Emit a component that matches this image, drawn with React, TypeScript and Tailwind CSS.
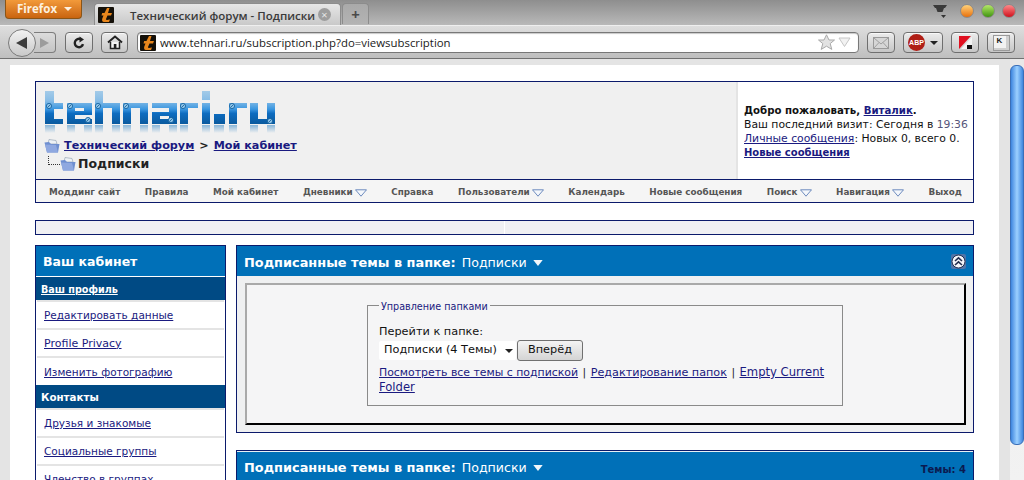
const V = '"DejaVu Sans", Verdana, sans-serif';

function Favicon() {
  return (
    <svg width="16" height="16" viewBox="0 0 16 16" className="shrink-0">
      <rect width="16" height="16" rx="1" fill="#141009" />
      <path d="M9 1 L11.5 1 L10 6 L14 6 L13 8.5 L9.5 8.5 L8 12 C7.8 13 8.6 13.2 12 12.5 L11 15 L6 15 C4 15 3.8 13 4.3 11.5 L5.5 8.5 L3.5 8.5 L4.2 6 L6.5 6 Z" fill="#e8861c" />
    </svg>
  );
}

function ToolBtn({ w, children }: { w: string; children: React.ReactNode }) {
  return (
    <div className={`${w} h-[21px] shrink-0 flex items-center justify-center rounded-[4px] border border-[#6f6f6f] bg-gradient-to-b from-[#ececec] to-[#c6c6c6] shadow-[inset_0_1px_0_#f8f8f8]`}>
      {children}
    </div>
  );
}

function Chrome() {
  return (
    <div className="shrink-0 h-[59px] flex flex-col" style={{ fontFamily: '"Open Sans", sans-serif' }}>
      <div className="h-[25px] flex items-start bg-gradient-to-b from-[#8e8e8e] to-[#b9b9b9] pl-[5px] pr-[8px]">
        <div className="w-[77px] h-[19px] flex items-center justify-center gap-[7px] pl-[2px] rounded-b-[4px] border border-t-0 border-[#8a5416] bg-gradient-to-b from-[#f29a3a] to-[#c9640e] text-[11.5px] font-bold text-[#fdf1df]">
          Firefox
          <span className="w-0 h-0 border-x-[4px] border-x-transparent border-t-[4px] border-t-[#fdf1df]" />
        </div>
        <div className="ml-[12px] mt-[3px] w-[247px] h-[22px] flex items-center pl-[3px] pr-[9px] rounded-t-[4px] border border-b-0 border-[#8c8c8c] bg-gradient-to-b from-[#e6e6e6] to-[#c9c9c9]">
          <Favicon />
          <span className="ml-[16px] pt-[2px] text-[11.5px] font-semibold text-[#3a3a3a] whitespace-nowrap">Технический форум - Подписки</span>
          <span className="ml-auto w-[13px] h-[13px] rounded-full bg-[#9d9d9d] flex items-center justify-center text-[#e6e6e6] text-[11px] leading-none">×</span>
        </div>
        <div className="ml-[1px] mt-[3px] w-[27px] h-[21px] flex items-center justify-center rounded-t-[4px] border border-b-0 border-[#8c8c8c] bg-gradient-to-b from-[#a9a9a9] to-[#b3b3b3] text-[15px] font-bold leading-none text-[#4a4a4a]">+</div>
        <div className="ml-auto mt-[4px] flex items-center">
          <svg width="16" height="14" viewBox="0 0 16 14" className="mr-[12px]">
            <path d="M1 1H15L13 4H12L10.5 8H5.5L4 4H3Z" fill="#3a3a3a" />
            <path d="M9 11H14L11.5 14Z" fill="#333" />
          </svg>
          <Light from="#ffd27a" to="#e8700c" />
          <span className="w-[7px]" />
          <Light from="#b5e868" to="#3f9410" />
          <span className="w-[7px]" />
          <Light from="#ff8a8a" to="#d0101c" />
        </div>
      </div>
      <div className="h-[34px] flex items-center bg-gradient-to-b from-[#dedede] to-[#bfbfbf] border-t border-[#efefef] border-b border-b-[#717171] pl-[8px] pr-[9px] pt-[1px]">
        <div className="flex items-center shrink-0">
          <div className="relative z-10 w-[28px] h-[28px] rounded-full border border-[#7a7a7a] bg-gradient-to-b from-[#f2f2f2] to-[#c9c9c9] flex items-center justify-center">
            <span className="w-0 h-0 border-y-[6px] border-y-transparent border-r-[11px] border-r-[#3d3d3d] mr-[2px]" />
          </div>
          <div className="-ml-[2px] w-[22px] h-[21px] rounded-r-[4px] border border-l-0 border-[#7d7d7d] bg-gradient-to-b from-[#dcdcdc] to-[#c4c4c4] flex items-center justify-center">
            <span className="w-0 h-0 border-y-[5px] border-y-transparent border-l-[9px] border-l-[#9c9c9c]" />
          </div>
        </div>
        <span className="w-[9px] shrink-0" />
        <ToolBtn w="w-[28px]">
          <svg width="14" height="14" viewBox="0 0 14 14" fill="none">
            <path d="M11 8.2A4.2 4.2 0 1 1 8.8 3.2" stroke="#222" strokeWidth="2.4" />
            <path d="M7.5 0.5L12 3.4L7.5 6.4Z" fill="#222" />
          </svg>
        </ToolBtn>
        <span className="w-[8px] shrink-0" />
        <ToolBtn w="w-[27px]">
          <svg width="16" height="15" viewBox="0 0 16 15" fill="none">
            <path d="M1 7.5L8 1.5L15 7.5" stroke="#222" strokeWidth="2" />
            <path d="M3.5 7V13.5H12.5V7" stroke="#222" strokeWidth="1.5" fill="#f4f4f4" />
            <rect x="6.8" y="9" width="2.6" height="4.5" fill="#222" />
          </svg>
        </ToolBtn>
        <span className="w-[9px] shrink-0" />
        <div className="w-[722px] h-[21px] shrink-0 flex items-center pl-[2px] pr-[6px] rounded-[4px] border border-[#787878] bg-white shadow-[inset_0_1px_1px_#c8c8c8]">
          <Favicon />
          <span className="ml-[4px] text-[11.4px] text-[#1a1a1a] whitespace-nowrap">www.tehnari.ru/subscription.php?do=viewsubscription</span>
          <svg width="34" height="17" viewBox="0 0 34 17" className="ml-auto">
            <path d="M8.5 0.8L11 6H16.5L12.2 9.6L13.8 15.4L8.5 12.2L3.2 15.4L4.8 9.6L0.5 6H6Z" fill="#e2e2e2" stroke="#a9a9a9" />
            <path d="M21 4H32L26.5 12.5Z" fill="#f2f2f2" stroke="#c6c6c6" />
          </svg>
        </div>
        <span className="w-[8px] shrink-0" />
        <ToolBtn w="w-[28px]">
          <svg width="16" height="12" viewBox="0 0 16 12">
            <rect x="0.5" y="0.5" width="15" height="11" fill="#d6d6d6" stroke="#9a9a9a" />
            <path d="M1 1L8 7L15 1M1 11L6 5.5M15 11L10 5.5" fill="none" stroke="#a0a0a0" />
          </svg>
        </ToolBtn>
        <span className="w-[8px] shrink-0" />
        <ToolBtn w="w-[40px]">
          <div className="flex items-center gap-[5px]">
            <span className="w-[17px] h-[17px] rounded-full bg-[#b01f16] text-white text-[7px] font-bold flex items-center justify-center leading-none" style={{ fontFamily: '"Liberation Sans", sans-serif' }}>ABP</span>
            <span className="w-0 h-0 border-x-[4px] border-x-transparent border-t-[4px] border-t-[#222]" />
          </div>
        </ToolBtn>
        <span className="w-[8px] shrink-0" />
        <ToolBtn w="w-[28px]">
          <svg width="16" height="15" viewBox="0 0 16 15">
            <path d="M2 1H14L2 14Z" fill="#e01020" />
            <path d="M15 2V14H4Z" fill="#f4f4f4" />
            <rect x="10" y="10" width="5" height="4" fill="#111" />
          </svg>
        </ToolBtn>
        <span className="w-[8px] shrink-0" />
        <ToolBtn w="w-[28px]">
          <div className="w-[17px] h-[16px] border border-[#9a9a9a] bg-[#f2f2f2] text-[8px] font-bold text-[#222] flex items-start justify-start pl-[3px] leading-[10px] shadow-[inset_-3px_-2px_0_#cfcfcf]" style={{ fontFamily: '"Liberation Sans", sans-serif' }}>K</div>
        </ToolBtn>
      </div>
    </div>
  );
}

function Light({ from, to }: { from: string; to: string }) {
  return <span className="w-[14px] h-[14px] rounded-full border border-[#8a8a8a]" style={{ background: `linear-gradient(${from}, ${to})` }} />;
}

const R: [number, number, number, number][] = [
  // t
  [45, 90, 9, 33], [45, 102, 18, 6], [45, 118, 18, 5],
  // e
  [67, 102, 25, 5], [67, 102, 8, 21], [84, 102, 8, 12], [67, 110, 25, 4], [67, 118, 25, 5],
  // h
  [95, 90, 8, 33], [95, 102, 25, 5], [112, 102, 8, 21],
  // n
  [123, 102, 25, 5], [123, 102, 8, 21], [140, 102, 8, 21],
  // a
  [152, 102, 25, 5], [169, 102, 8, 21], [152, 111, 25, 4], [152, 111, 8, 12], [152, 118, 25, 5],
  // r
  [180, 102, 18, 5], [180, 102, 8, 21],
  // i
  [202, 90, 8, 9], [202, 102, 8, 21],
  // .
  [214, 113, 11, 10],
  // r
  [229, 102, 18, 5], [229, 102, 8, 21],
  // u
  [250, 102, 8, 21], [267, 102, 8, 21], [250, 118, 25, 5],
];
const Bolts: [number, number][] = [[49, 105], [70, 105], [98, 105], [126, 105], [183, 105], [232, 105], [171, 119], [270, 120], [88, 119]];

function Logo() {
  return (
    <svg width="236" height="46" viewBox="44 88 236 46" className="block">
      <defs>
        <linearGradient id="lg" gradientUnits="userSpaceOnUse" x1="0" y1="90" x2="0" y2="123">
          <stop offset="0" stopColor="#a4cbe8" />
          <stop offset="0.3" stopColor="#86bce6" />
          <stop offset="0.55" stopColor="#3a96e0" />
          <stop offset="0.68" stopColor="#0e6cc0" />
          <stop offset="1" stopColor="#0a5a9e" />
        </linearGradient>
        <linearGradient id="rf" gradientUnits="userSpaceOnUse" x1="0" y1="123" x2="0" y2="132">
          <stop offset="0" stopColor="#7aaed6" />
          <stop offset="1" stopColor="#f0f0f0" />
        </linearGradient>
      </defs>
      {R.map(([x, y, w, h], i) => <rect key={i} x={x} y={y} width={w} height={h} fill="url(#lg)" />)}
      {[45, 67, 84, 95, 112, 123, 140, 152, 169, 180, 202, 214, 229, 250, 267].map((x, i) => (
        <rect key={i} x={x} y={124} width={x === 45 || x === 214 ? 10 : 8} height={8} fill="url(#rf)" />
      ))}
      {Bolts.map(([x, y], i) => (
        <g key={i}>
          <circle cx={x} cy={y} r={2.6} fill="#8fc4e8" stroke="#0d5a98" strokeWidth={0.8} />
          <path d={`M${x - 1.4} ${y + 1.4}L${x + 1.4} ${y - 1.4}`} stroke="#0d5a98" strokeWidth={0.8} />
        </g>
      ))}
    </svg>
  );
}

function Folder({ w = 16 }: { w?: number }) {
  return (
    <svg width={w} height="15" viewBox="0 0 16 15" className="shrink-0">
      <path d="M5 0.5L12 1.5L13 5H4Z" fill="#eef2f6" stroke="#9aa8b8" strokeWidth="0.7" />
      <path d="M0.5 3.5L5 3L7 5H15.5L14 13.5H3Z" fill="#6f8fd0" />
      <path d="M3 13.5L1 5.5L12 6L14 13.5Z" fill="#8fa8e0" />
    </svg>
  );
}

function Caret() {
  return (
    <svg width="12" height="8" viewBox="0 0 12 8" className="ml-[2px] shrink-0">
      <path d="M0.5 0.8H11.5L6 7.2Z" fill="#f4f7fb" stroke="#5f7fb8" strokeWidth="0.9" />
    </svg>
  );
}

const NAV: { t: string; c?: boolean }[] = [
  { t: 'Моддинг сайт' }, { t: 'Правила' }, { t: 'Мой кабинет' }, { t: 'Дневники', c: true }, { t: 'Справка' },
  { t: 'Пользователи', c: true }, { t: 'Календарь' }, { t: 'Новые сообщения' }, { t: 'Поиск', c: true },
  { t: 'Навигация', c: true }, { t: 'Выход' },
];

function Header() {
  return (
    <div className="border border-[#0b1a6b]">
      <div className="h-[98px] flex border-b border-[#0b1a6b]">
        <div className="w-[702px] bg-[#f0f0f0] pl-[8px] pt-[7px] border-r-2 border-[#e4e4e4]">
          <Logo />
          <div className="flex items-center h-[16px] mt-[3px] text-[11.2px] font-bold" style={{ fontFamily: V }}>
            <Folder />
            <a className="ml-[4px] text-[#1a1a80] underline">Технический форум</a>
            <span className="ml-[5px] text-[#222]">&gt;</span>
            <a className="ml-[5px] text-[#1a1a80] underline">Мой кабинет</a>
          </div>
          <div className="flex items-center h-[18px] pl-[4px] pt-[2px] text-[12.5px] font-bold text-[#222]">
            <span className="w-[12px] h-[9px] border-l border-b border-dotted border-[#333] mb-[7px]" />
            <Folder />
            <span className="ml-[2px]">Подписки</span>
          </div>
        </div>
        <div className="flex-1 bg-white pl-[6px] pt-[22px] text-[10.8px] leading-[14px] text-[#111] whitespace-nowrap">
          <div className="font-bold text-[10.2px]">Добро пожаловать, <a className="text-[#1a1a80] underline">Виталик</a>.</div>
          <div>Ваш последний визит: Сегодня в <span className="text-[#55557a]">19:36</span></div>
          <div><a className="text-[#1a1a80] underline">Личные сообщения</a>: Новых 0, всего 0.</div>
          <div className="font-bold text-[10px]"><a className="text-[#1a1a80] underline">Новые сообщения</a></div>
        </div>
      </div>
      <div className="h-[22px] flex items-center justify-between bg-[#f5f5f5] pl-[13px] pr-[11px] pt-[4px] text-[8.8px] font-bold text-[#555] whitespace-nowrap">
        {NAV.map((n) => (
          <span key={n.t} className="flex items-center">{n.t}{n.c && <Caret />}</span>
        ))}
      </div>
    </div>
  );
}

function SideSection({ children, u }: { children: string; u?: boolean }) {
  return (
    <div className={`h-[23px] flex items-center pl-[5px] bg-[#004a84] font-bold text-white ${u ? 'underline text-[9.6px] pt-[3px]' : 'text-[10.3px] pt-[2px]'}`}>{children}</div>
  );
}

function SideItem({ children, latin, last }: { children: string; latin?: boolean; last?: boolean }) {
  return (
    <div className={`flex items-center pl-[7px] pt-[2px] text-[#1a1a80] underline whitespace-nowrap ${latin ? 'text-[11px]' : 'text-[10.5px]'} ${last ? 'h-[27px] pl-[8px]' : 'h-[28px] mx-[1px] border-b-2 border-[#e4e4e4]'}`}>{children}</div>
  );
}

function Sidebar() {
  return (
    <div className="w-[191px] shrink-0 h-[260px] border border-[#0b1a6b] border-b-0 bg-white overflow-hidden">
      <div className="h-[31px] flex items-center pl-[7px] pt-[3px] bg-[#0070b8] border-b border-white text-[12.5px] font-bold text-white">Ваш кабинет</div>
      <SideSection u>Ваш профиль</SideSection>
      <div className="border-t-2 border-[#e4e4e4] mx-[1px]" />
      <SideItem>Редактировать данные</SideItem>
      <SideItem latin>Profile Privacy</SideItem>
      <SideItem last>Изменить фотографию</SideItem>
      <SideSection>Контакты</SideSection>
      <div className="border-t-2 border-[#e4e4e4] mx-[1px]" />
      <SideItem>Друзья и знакомые</SideItem>
      <SideItem>Социальные группы</SideItem>
      <SideItem>Членство в группах</SideItem>
    </div>
  );
}

function PanelHead({ right, low }: { right: React.ReactNode; low?: boolean }) {
  return (
    <div className={`h-[30px] flex items-center pl-[7px] pr-[7px] bg-[#0070b8] text-white whitespace-nowrap ${low ? 'pt-[4px]' : 'pt-[2px]'}`}>
      <span className="text-[12.9px] font-bold">Подписанные темы в папке:</span>
      <span className="ml-[6px] text-[12.6px]">Подписки</span>
      <svg width="10" height="6" viewBox="0 0 11 7" className="ml-[6px]"><path d="M0 0H11L5.5 7Z" fill="#f2f6fa" /></svg>
      <span className="ml-auto">{right}</span>
    </div>
  );
}

function Main() {
  return (
    <div className="flex-1 min-w-0 flex flex-col gap-[17px]">
      <div className="h-[188px] border border-[#0b1a6b] bg-[#eff0f1]">
        <PanelHead low right={
          <span className="block w-[15px] h-[15px] -mt-[4px] bg-[#4f74a8] rounded-[2px]">
            <svg width="15" height="15" viewBox="0 0 15 15">
              <circle cx="7.5" cy="7.5" r="6.5" fill="#f4f6fa" stroke="#24304f" />
              <path d="M4 7L7.5 3.8L11 7M4 11L7.5 7.8L11 11" fill="none" stroke="#24304f" strokeWidth="1.6" />
            </svg>
          </span>
        } />
        <div className="ml-[8px] mr-[7px] mt-[7px] h-[142px] border-t-2 border-l-2 border-t-[#a9a9a9] border-l-[#a9a9a9] border-r-2 border-b-2 border-r-black border-b-black bg-[#f5f5f6] pt-[14px] pl-[120px]">
          <fieldset className="w-[476px] h-[107px] border border-[#8a8a8a] pl-[11px] pr-[10px] block">
            <legend className="px-[2px] text-[9.6px] leading-[12px] font-normal text-[#1a1a80] translate-y-[2px]" style={{ fontFamily: V }}>Управление папками</legend>
            <div className="mt-[14px] text-[11.3px] leading-[14px] text-[#111]">Перейти к папке:</div>
            <div className="flex items-center mt-[1px]">
              <div className="w-[137px] h-[19px] flex items-center justify-between pl-[5px] pr-[3px] bg-white rounded-[2px] text-[11.3px] text-[#111] whitespace-nowrap">
                Подписки (4 Темы)
                <span className="w-0 h-0 border-x-[4px] border-x-transparent border-t-[4px] border-t-[#222]" />
              </div>
              <div className="ml-[1px] w-[66px] h-[21px] flex items-center justify-center rounded-[3px] border border-[#707070] bg-gradient-to-b from-[#f4f4f4] to-[#d4d4d4] text-[11.3px] text-[#111]">Вперёд</div>
            </div>
            <div className="mt-[4px] text-[10.9px] leading-[15px] text-[#1a1a80]">
              <a className="underline">Посмотреть все темы с подпиской</a>
              <span className="text-[#222] px-[1px]"> | </span>
              <a className="underline text-[11.2px]">Редактирование папок</a>
              <span className="text-[#222] px-[1px]"> | </span>
              <a className="underline text-[11.6px]">Empty Current Folder</a>
            </div>
          </fieldset>
        </div>
      </div>
      <div className="h-[40px] border border-[#0b1a6b] border-b-0 bg-[#0070b8]">
        <div className="h-[1px] bg-[#e8f0f6]" />
        <PanelHead right={<span className="text-[10px] font-bold text-[#0b1a50]">Темы: 4</span>} />
      </div>
    </div>
  );
}

function Scrollbar() {
  return (
    <div className="ml-[11px] w-[14px] shrink-0 bg-gradient-to-b from-[#e8e8e8] to-[#f2f2f2] -mt-[6px] relative">
      <div className="mt-[6px] h-[380px] rounded-[6px] border border-[#3a6fb8] bg-gradient-to-r from-[#3e86de] via-[#9bd0ff] to-[#3e86de]" />
    </div>
  );
}

export default function App() {
  return (
    <div className="w-[1024px] h-[480px] overflow-hidden flex flex-col bg-[#e4e4e4]" style={{ fontFamily: V }}>
      <Chrome />
      <div className="flex-1 min-h-0 flex pl-[10px] pt-[6px]">
        <div className="w-[989px] shrink-0 bg-white pl-[25px] pr-[25px] pt-[16px] overflow-hidden">
          <Header />
          <div className="mt-[17px] h-[15px] flex border border-[#0b1a6b] bg-[#f0f0f3]">
            <div className="w-[469px] border-r border-white" />
          </div>
          <div className="mt-[10px] flex gap-[10px]">
            <Sidebar />
            <Main />
          </div>
        </div>
        <Scrollbar />
      </div>
    </div>
  );
}
